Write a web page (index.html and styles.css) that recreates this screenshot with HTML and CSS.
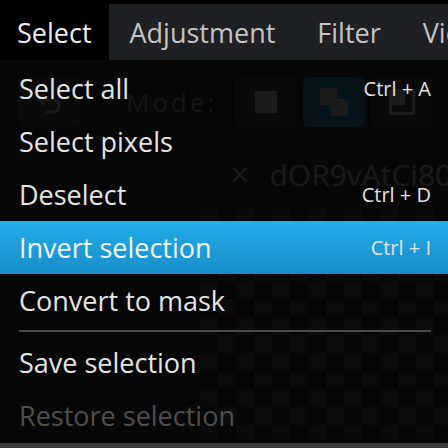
FILE: index.html
```html
<!DOCTYPE html>
<html>
<head>
<meta charset="utf-8">
<link rel="stylesheet" href="styles.css">
</head>
<body>
<div class="app">
  <nav class="menubar">
    <div class="tab active">Select</div>
    <div class="tab">Adjustment</div>
    <div class="tab">Filter</div>
    <div class="tab">View</div>
  </nav>
  <div class="workspace">
    <div class="toolbar">
      <div class="tbtn">
        <svg width="30" height="30" viewBox="0 0 30 30"><path d="M10 8 L5 13 L10 18 M5 13 H19 A6 6 0 0 1 19 25 H12" fill="none" stroke="#cfcfcf" stroke-width="3"/></svg>
      </div>
      <span class="mode">Mode:</span>
      <div class="tbtn"><span class="sq"></span></div>
      <div class="tbtn on"><span class="sq2"></span></div>
      <div class="tbtn"><span class="sq3"></span></div>
      <span class="mode">F</span>
    </div>
    <div class="tabrow">
      <div class="doc"></div>
      <span class="close">×</span>
      <span class="docname">dOR9vAtCi80</span>
    </div>
    <div class="canvas"></div>
  </div>
  <div class="menu">
    <div class="item"><span>Select all</span><span class="key">Ctrl + A</span></div>
    <div class="item"><span>Select pixels</span></div>
    <div class="item"><span>Deselect</span><span class="key">Ctrl + D</span></div>
    <div class="item hi"><span>Invert selection</span><span class="key">Ctrl + I</span></div>
    <div class="item"><span>Convert to mask</span></div>
    <div class="sep"></div>
    <div class="item"><span>Save selection</span></div>
    <div class="item off"><span>Restore selection</span></div>
  </div>
</div>
</body>
</html>
```

FILE: styles.css
```css
html, body {
  margin: 0;
  padding: 0;
  background: #000;
  width: 448px;
  height: 448px;
  overflow: hidden;
  font-family: "Open Sans", "Noto Sans", sans-serif;
}
.app {
  position: relative;
  width: 448px;
  height: 448px;
  padding-top: 4px;
  box-sizing: border-box;
  background: #000;
}
.menubar {
  height: 56px;
  background: #1f2024;
  display: flex;
  align-items: center;
  white-space: nowrap;
  overflow: hidden;
}
.tab {
  height: 56px;
  display: flex;
  align-items: center;
  padding: 0 21px;
  font-size: 27px;
  color: #c4c4c4;
  flex: none;
}
.tab.active {
  background: #000;
  color: #ececec;
  padding: 0 17px 0 17px;
}
.workspace {
  background: #3a3a3a;
  height: 388px;
  position: relative;
}
.toolbar {
  display: flex;
  align-items: center;
  gap: 6px;
  padding: 17px 0 0 18px;
  height: 50px;
}
.tbtn {
  width: 62px;
  height: 50px;
  border-radius: 6px;
  background: #555;
  display: flex;
  align-items: center;
  justify-content: center;
  flex: none;
}
.tbtn.on { background: #2a9fd6; }
.mode {
  color: #a8a8a8;
  font-size: 26px;
  letter-spacing: 3px;
  margin: 0 12px 0 40px;
}
.sq { width: 22px; height: 22px; background: #d8d8d8; }
.sq2 {
  width: 28px; height: 28px;
  background: linear-gradient(#d8d8d8, #d8d8d8) 0 0 / 17px 17px no-repeat,
              linear-gradient(#d8d8d8, #d8d8d8) 11px 11px / 17px 17px no-repeat;
}
.sq3 {
  width: 26px; height: 26px;
  background: linear-gradient(#d8d8d8, #d8d8d8) 0 0 / 16px 16px no-repeat;
  box-shadow: inset 0 0 0 3px #d8d8d8;
}
.tabrow {
  display: flex;
  align-items: center;
  height: 70px;
  margin-top: 12px;
  padding-left: 180px;
  gap: 20px;
}
.doc {
  width: 88px;
  height: 64px;
  border: 1px solid #4a4a4a;
  display: none;
}
.close { color: #cfcfcf; font-size: 34px; margin-left: 50px; }
.docname { color: #cfcfcf; font-size: 30px; white-space: nowrap; }
.canvas {
  margin-left: 200px;
  height: 230px;
  background-color: #5a5a5a;
  background-image:
    linear-gradient(45deg, #333 25%, transparent 25%, transparent 75%, #333 75%),
    linear-gradient(45deg, #333 25%, transparent 25%, transparent 75%, #333 75%);
  background-size: 36px 36px;
  background-position: 0 0, 18px 18px;
}
.menu {
  position: absolute;
  left: 0;
  top: 60px;
  width: 448px;
  height: 383px;
  box-sizing: border-box;
  padding-top: 2px;
  background: rgba(0, 0, 0, 0.88);
}
.item {
  height: 53px;
  display: flex;
  align-items: center;
  justify-content: space-between;
  padding: 0 17px 0 19px;
  font-size: 27px;
  color: #e4e4e4;
  white-space: nowrap;
}
.item.hi {
  background: linear-gradient(#21ade7, #1a8dca);
  color: #f4f4f4;
}
.item.off { color: #4e4e4e; }
.key {
  font-size: 20px;
  color: #e2e2e2;
}
.sep {
  height: 2px;
  background: #4a4a4a;
  margin: 3px 17px 4px 19px;
}
```
